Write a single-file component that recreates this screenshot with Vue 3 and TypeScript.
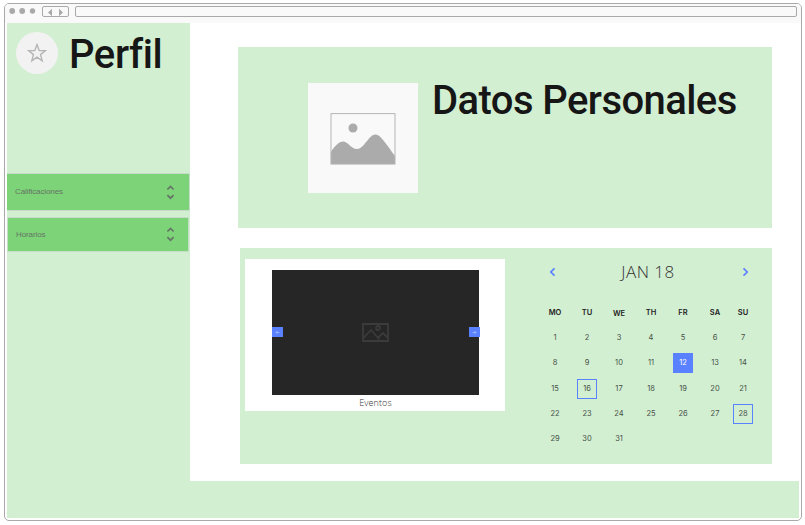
<script setup lang="ts">
interface DayCell {
  label: string
  state?: 'selected' | 'outlined'
}

const weekdays: string[] = ['MO', 'TU', 'WE', 'TH', 'FR', 'SA', 'SU']

const days: DayCell[] = Array.from({ length: 31 }, (_, i) => {
  const day = i + 1
  return {
    label: String(day),
    state: day === 12 ? 'selected' : day === 16 || day === 28 ? 'outlined' : undefined,
  }
})

const menu = [
  { label: 'Calificaciones', kind: 'large' },
  { label: 'Horarios', kind: 'small' },
]
</script>

<template>
  <div class="window">
    <header class="chrome">
      <svg class="dots" width="28" height="8" viewBox="0 0 28 8">
        <circle cx="3.2" cy="4" r="2.9" />
        <circle cx="13.2" cy="4" r="2.9" />
        <circle cx="23.5" cy="4" r="2.7" />
      </svg>
      <div class="history">
        <svg width="25" height="9" viewBox="0 0 25 9">
          <path d="M9 .7v7.6L5 4.5zM16 .7v7.6l4-3.8z" />
        </svg>
      </div>
      <div class="address"></div>
    </header>

    <div class="page">
      <aside class="sidebar">
        <div class="profile">
          <div class="avatar">
            <svg width="20" height="20" viewBox="0 0 20 20">
              <path d="M10 1.6l2.2 6h6.2l-4.9 4 1.7 6.3L10 14.2l-5.2 3.7 1.7-6.3-4.9-4h6.2z" />
            </svg>
          </div>
          <h1 class="title">Perfil</h1>
        </div>
        <nav class="menu">
          <div v-for="item in menu" :key="item.label" class="menu-item" :class="item.kind">
            <span>{{ item.label }}</span>
            <svg width="9" height="15" viewBox="0 0 9 15">
              <path d="M1.4 4.5l3.1-3 3.1 3M1.4 10.2l3.1 3 3.1-3" />
            </svg>
          </div>
        </nav>
      </aside>

      <main class="content">
        <section class="personal">
          <div class="photo">
            <svg width="66" height="52" viewBox="0 0 66 52">
              <path class="hill" d="M.8 39C5 33 9 28.5 13 28.5c5 0 8 7.5 14 7.5C34 36 39 21.5 45.5 21.5 51 21.5 58 34 65 43v8H.8z" />
              <circle class="hill" cx="23" cy="15" r="4.5" />
              <rect class="edge" x="1" y=".6" width="64" height="50.5" />
            </svg>
          </div>
          <h1 class="title wide">Datos Personales</h1>
        </section>

        <section class="activity">
          <div class="events">
            <div class="slide">
              <button class="arrow" aria-label="Anterior">
                <svg width="5" height="5" viewBox="0 0 5 5"><path d="M4.5 2.5H1M2.5 1L1 2.5 2.5 4" /></svg>
              </button>
              <svg class="placeholder" width="27" height="19" viewBox="0 0 27 19">
                <path d="M1 1h25v17H1zM1 15.5l8-8.5 8.5 9.5M16 14.5l5-4.5 5 5" />
                <circle cx="16" cy="5" r="2" />
              </svg>
              <button class="arrow" aria-label="Siguiente">
                <svg width="5" height="5" viewBox="0 0 5 5"><path d="M.5 2.5H4M2.5 1L4 2.5 2.5 4" /></svg>
              </button>
            </div>
            <p class="caption">Eventos</p>
          </div>

          <div class="calendar">
            <div class="month">
              <svg width="7" height="10" viewBox="0 0 7 10"><path d="M5.5 1.3L1.8 5l3.7 3.7" /></svg>
              <span>JAN 18</span>
              <svg width="7" height="10" viewBox="0 0 7 10"><path d="M1.5 1.3L5.2 5 1.5 8.7" /></svg>
            </div>
            <div class="grid">
              <span v-for="name in weekdays" :key="name" class="weekday" :class="{ low: name === 'WE' }">{{ name }}</span>
              <span v-for="day in days" :key="day.label" class="day" :class="day.state">{{ day.label }}</span>
            </div>
          </div>
        </section>
      </main>
    </div>
  </div>
</template>

<style>
body {
  background: #fff;
}
</style>

<style scoped>
* {
  box-sizing: border-box;
}
.window {
  width: 798px;
  height: 518px;
  margin: 3px 0 0 4px;
  border: 1px solid #a9a9a9;
  border-radius: 5px;
  background: #fff;
  overflow: hidden;
}
.chrome {
  height: 19px;
  display: flex;
  align-items: flex-start;
  padding: 2px 4px 0;
  background: #f9f9f9;
}
.dots {
  margin-top: 1px;
  fill: #a9a9a9;
}
.history {
  width: 27px;
  height: 11px;
  margin-left: 5px;
  border: 1px solid #a9a9a9;
  border-radius: 2px;
}
.history svg {
  display: block;
  margin-top: 1px;
  fill: #a9a9a9;
}
.address {
  flex: 1;
  height: 11px;
  margin-left: 6px;
  border: 1px solid #a9a9a9;
  border-radius: 2px;
}
.page {
  display: flex;
  align-items: flex-start;
  height: 495px;
  margin: 0 2px;
  background: #d3efd2;
}
.sidebar {
  width: 183px;
}
.profile {
  display: flex;
  height: 150px;
  padding: 9px 0 0 9px;
}
.avatar {
  width: 42px;
  height: 42px;
  display: flex;
  align-items: center;
  justify-content: center;
  border-radius: 50%;
  background: #f2f2f2;
}
.avatar path {
  fill: none;
  stroke: #b5b5b5;
  stroke-width: 1.4;
}
.title {
  margin: 0;
  color: #161616;
  font: 500 40px/44px Roboto, sans-serif;
  letter-spacing: -0.4px;
  white-space: nowrap;
}
.profile .title {
  margin: 1px 0 0 11px;
}
.menu {
  display: flex;
  flex-direction: column;
  gap: 6px;
}
.menu-item {
  display: flex;
  align-items: center;
  justify-content: space-between;
  border: 1px solid #c6dcc8;
  border-radius: 1px;
  background: #7dd377;
  color: #657466;
  font: 8px/10px "Liberation Sans", sans-serif;
  letter-spacing: -0.1px;
}
.menu-item svg {
  fill: none;
  stroke: #657466;
  stroke-width: 1.7;
}
.large {
  height: 38px;
  padding: 0 14px 0 8px;
  border-left: 0;
}
.small {
  height: 35px;
  margin-right: 1px;
  padding: 0 13px 0 8px;
}
.content {
  width: 609px;
  height: 458px;
  padding: 24px 27px 0 48px;
  background: #fff;
}
.personal {
  display: flex;
  height: 181px;
  padding: 36px 0 0 70px;
  background: #d3efd2;
}
.photo {
  width: 110px;
  height: 110px;
  display: flex;
  align-items: center;
  justify-content: center;
  padding-top: 1px;
  background: #f9f9f9;
}
.hill {
  fill: #ababab;
}
.edge {
  fill: none;
  stroke: #b5b5b5;
}
.wide {
  margin: -4px 0 0 14px;
  letter-spacing: -0.58px;
}
.activity {
  display: flex;
  height: 216px;
  margin: 20px 0 0 2px;
  padding: 11px 0 0 5px;
  background: #d3efd2;
}
.events {
  width: 260px;
  height: 152px;
  padding: 11px 26px 0 27px;
  background: #fff;
}
.slide {
  display: flex;
  align-items: center;
  justify-content: space-between;
  height: 125px;
  margin-right: -1px;
  padding-bottom: 1px;
  background: linear-gradient(#262626, #262626) 0 0 / 207px 100% no-repeat;
}
.arrow {
  width: 11px;
  height: 10px;
  padding: 0;
  display: flex;
  align-items: center;
  justify-content: center;
  border: 0;
  background: #5a81ff;
}
.arrow path {
  fill: none;
  stroke: #b2c4ff;
  stroke-width: 0.7;
}
.placeholder {
  margin-right: 1px;
  fill: none;
  stroke: #3b3b3b;
  stroke-width: 1.8;
}
.caption {
  margin: 2px 0 0;
  color: #333;
  text-align: center;
  font: 300 9px/12px "Open Sans", sans-serif;
  letter-spacing: 0.1px;
}
.calendar {
  width: 216px;
  margin-left: 34px;
}
.month {
  display: flex;
  align-items: center;
  justify-content: space-between;
  height: 26px;
  padding: 0 6px 0 10px;
  color: #333;
  font: 300 17px/26px "Open Sans", sans-serif;
  letter-spacing: 0.5px;
}
.month span {
  margin-right: 2px;
}
.month path {
  fill: none;
  stroke: #5a81ff;
  stroke-width: 1.7;
}
.grid {
  display: grid;
  grid-template-columns: repeat(6, 32px) 24px;
  grid-template-rows: 25px 25px 26px 25px 25px 26px;
  align-items: center;
  justify-items: center;
  margin-top: 15px;
  color: #465046;
  font: 7.5px/18px Inter, sans-serif;
}
.weekday {
  color: #222;
  font-size: 7.5px;
  font-weight: 600;
}
.low {
  padding-top: 2px;
}
.day {
  width: 20px;
  height: 20px;
  border: 1px solid transparent;
  text-align: center;
}
.selected {
  background: #5a81ff;
  border-color: #5a81ff;
  color: #fff;
}
.outlined {
  border-color: #5a81ff;
}
</style>
